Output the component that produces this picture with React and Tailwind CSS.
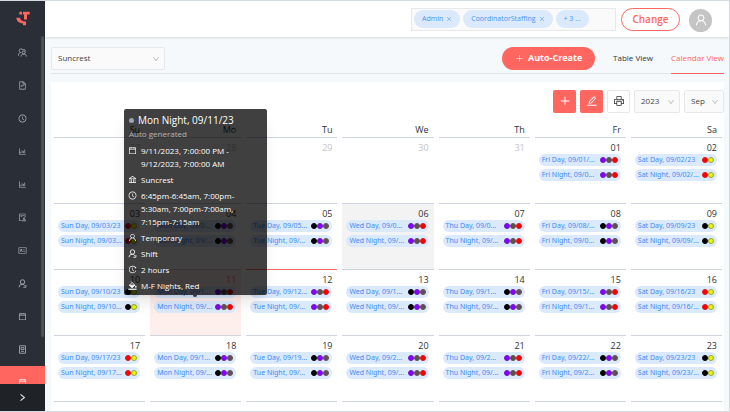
import React from "react";
import {
  AiOutlineFileText, AiOutlineClockCircle, AiOutlineBarChart, AiOutlineIdcard, AiOutlineCalendar,
  AiOutlineUser, AiOutlinePrinter, AiOutlineEdit, AiOutlinePlus, AiOutlineRight, AiOutlineDown,
  AiOutlineBank, AiOutlineClose, AiOutlineAudit, AiOutlineHistory,
} from "react-icons/ai";

function Logo() {
  return (
    <svg viewBox="0 0 42 44" className="h-[15px] w-[14px] text-[#ff6660]" fill="currentColor" aria-hidden="true">
      <path d="M10 2h8v8h-8z M21 2h20v8h-8v15h-9V10h-3z" />
      <path d="M1 20h11c1 8 7 11 18 11v11h-9v-5C10 37 2 31 1 20z" />
    </svg>
  );
}

function PaintBucket({ className }) {
  return (
    <svg viewBox="0 0 24 24" className={className} fill="none" stroke="currentColor" strokeWidth="2" aria-hidden="true">
      <path d="M8 1l10 10-7 7-7-7 7-7" />
      <path d="M4 11h14l-7 7z" fill="currentColor" />
      <path d="M21 13c2 3 1 4 0 4s-2-1 0-4z" fill="currentColor" />
      <path d="M1 22h22" strokeWidth="3" />
    </svg>
  );
}

function UserShift({ className }) {
  return (
    <svg viewBox="0 0 24 24" className={className} fill="none" stroke="currentColor" strokeWidth="2.2" aria-hidden="true">
      <circle cx="12" cy="8" r="6" />
      <path d="M3 22c0-5 3-8 8-8s5 1 7 4M21 16v6h-7" />
    </svg>
  );
}

function UserPair({ className }) {
  return (
    <svg viewBox="0 0 24 24" className={className} fill="none" stroke="currentColor" strokeWidth="2" aria-hidden="true">
      <path d="M13 6a5 5 0 1 0-6 6C3 13 1 16 1 21" />
      <circle cx="15" cy="12" r="4" />
      <path d="M8 23c0-5 3-7 7-7s7 2 7 7M14 4c4-1 6 2 6 5" />
    </svg>
  );
}

function Ledger({ className }) {
  return (
    <svg viewBox="0 0 24 24" className={className} fill="none" stroke="currentColor" strokeWidth="2" aria-hidden="true">
      <path d="M4 2h16v20H4z" />
      <path d="M8 7h8v5H8zM8 17h8" />
    </svg>
  );
}

const NAV = [
  ["Staff", UserPair], ["Documents", AiOutlineFileText], ["Time", AiOutlineClockCircle],
  ["Reports", AiOutlineBarChart], ["Analytics", AiOutlineBarChart], ["Audit", AiOutlineAudit],
  ["Cards", AiOutlineIdcard], ["Users", UserShift], ["Calendar", AiOutlineCalendar],
  ["Ledger", Ledger],
];

const DOT = {
  k: "bg-black border-black", p: "bg-[#8800ff] border-[#7016c4]", g: "bg-[#5f4f4f] border-[#5f5555]",
  r: "bg-[#ff0000] border-[#d81818]", y: "bg-[#e8fb00] border-[#9aa334]",
};

const WEEKS = [
  [
    { d: "27", out: true }, { d: "28", out: true }, { d: "29", out: true }, { d: "30", out: true }, { d: "31", out: true },
    { d: "01", e: ["Fri Day, 09/01/...", "Fri Night, 09/0..."], c: "pgr" },
    { d: "02", e: ["Sat Day, 09/02/23", "Sat Night, 09/02/..."], c: "ry" },
  ],
  [
    { d: "03", e: ["Sun Day, 09/03/23", "Sun Night, 09/03..."], c: "ry" },
    { d: "04", e: ["Mon Day, 09/0...", "Mon Night, 09/..."], c: "kpg" },
    { d: "05", e: ["Tue Day, 09/05...", "Tue Night, 09/..."], c: "kpg" },
    { d: "06", e: ["Wed Day, 09/0...", "Wed Night, 09/..."], c: "pgr", tone: "hover" },
    { d: "07", e: ["Thu Day, 09/0...", "Thu Night, 09/..."], c: "pgr" },
    { d: "08", e: ["Fri Day, 09/08/...", "Fri Night, 09/0..."], c: "kpg" },
    { d: "09", e: ["Sat Day, 09/09/23", "Sat Night, 09/09/..."], c: "ky" },
  ],
  [
    { d: "10", e: ["Sun Day, 09/10/23", "Sun Night, 09/10..."], c: "ky" },
    { d: "11", e: ["Mon Day, 09/1...", "Mon Night, 09/..."], c: "pgr", tone: "selected" },
    { d: "12", e: ["Tue Day, 09/12...", "Tue Night, 09/..."], c: "pgr", tone: "today" },
    { d: "13", e: ["Wed Day, 09/1...", "Wed Night, 09/..."], c: "kpg" },
    { d: "14", e: ["Thu Day, 09/1...", "Thu Night, 09/..."], c: "kpg" },
    { d: "15", e: ["Fri Day, 09/15/...", "Fri Night, 09/1..."], c: "pgr" },
    { d: "16", e: ["Sat Day, 09/16/23", "Sat Night, 09/16/..."], c: "ry" },
  ],
  [
    { d: "17", e: ["Sun Day, 09/17/23", "Sun Night, 09/17..."], c: "ry" },
    { d: "18", e: ["Mon Day, 09/1...", "Mon Night, 09/..."], c: "kpg" },
    { d: "19", e: ["Tue Day, 09/19...", "Tue Night, 09/..."], c: "kpg" },
    { d: "20", e: ["Wed Day, 09/2...", "Wed Night, 09/..."], c: "pgr" },
    { d: "21", e: ["Thu Day, 09/2...", "Thu Night, 09/..."], c: "pgr" },
    { d: "22", e: ["Fri Day, 09/22/...", "Fri Night, 09/2..."], c: "kpg" },
    { d: "23", e: ["Sat Day, 09/23/23", "Sat Night, 09/23/..."], c: "ky" },
  ],
];

const TONE = {
  hover: "border-[#cfd4df] bg-[#f3f3f3]",
  selected: "border-[#cfd4df] bg-[#ffefec]",
  today: "border-[#ff6660]",
  plain: "border-[#cfd4df]",
};

function Event({ label, colors }) {
  return (
    <button className="flex h-3 w-full items-center rounded-full bg-[#dbe9fd] px-[3px] text-left font-['Noto_Sans',sans-serif] text-[7px] leading-3 text-[#3d8df7]">
      <span className="w-0 grow whitespace-nowrap">{label}</span>
      <span className="flex shrink-0">
        {colors.split("").map((c) => (
          <span key={c} className={`size-[6px] rounded-full border ${DOT[c]}`} />
        ))}
      </span>
    </button>
  );
}

function Day({ day }) {
  return (
    <div className={`h-[66px] min-w-0 border-t pl-1 pr-[5px] pt-[3px] ${TONE[day.tone || "plain"]}`}>
      <div className={`h-[13px] text-right text-[9px] leading-[14px] ${day.out ? "text-[#c4c4c4]" : day.tone === "selected" ? "text-[#ff6660]" : "text-[#333]"}`}>
        {day.d}
      </div>
      {day.e && (
        <div className="flex flex-col gap-[3px]">
          {day.e.map((l) => <Event key={l} label={l} colors={day.c} />)}
        </div>
      )}
    </div>
  );
}

function Select({ label, value, className }) {
  return (
    <div className={`relative ${className}`}>
      <select aria-label={label} className="block h-full w-full appearance-none rounded-[2px] border border-[#e6e8ec] bg-[#fafafa] px-[6px] text-[8px] text-[#444]">
        <option>{value}</option>
      </select>
      <AiOutlineDown className="pointer-events-none absolute right-[5px] top-2 size-2 text-[#b5b5b5]" />
    </div>
  );
}

function Tag({ children, closable }) {
  return (
    <span className="flex h-[18px] items-center gap-[3px] rounded-full bg-[#dbe9fd] px-2 text-[7px] text-[#4a96f8]">
      {children}
      {closable && <button aria-label={`Remove ${children}`}><AiOutlineClose className="size-[6px]" /></button>}
    </span>
  );
}

function TipRow({ icon: Icon, children }) {
  return (
    <div className="flex gap-1">
      <Icon className="mt-[2px] size-[9px] shrink-0" />
      <span>{children}</span>
    </div>
  );
}

function Tooltip() {
  return (
    <div role="tooltip" className="absolute left-[124px] top-[108px] w-[143px] rounded-[2px] bg-black/75 px-1 pb-[3px] pt-1 text-[8px] leading-[13px] text-white shadow-lg">
      <div className="flex items-center gap-1 pl-px text-[10px] leading-[14px]">
        <span className="size-[5px] rounded-full bg-[#9aa5b1]" />Mon Night, 09/11/23
      </div>
      <div className="pl-px leading-[13px] text-[#b5b5b5]">Auto generated</div>
      <div className="mt-1 flex flex-col gap-[3px]">
        <TipRow icon={AiOutlineCalendar}>9/11/2023, 7:00:00 PM -<br />9/12/2023, 7:00:00 AM</TipRow>
        <TipRow icon={AiOutlineBank}>Suncrest</TipRow>
        <TipRow icon={AiOutlineClockCircle}>6:45pm-6:45am, 7:00pm-<br />5:30am, 7:00pm-7:00am,<br />7:15pm-7:15am</TipRow>
        <TipRow icon={AiOutlineUser}>Temporary</TipRow>
        <TipRow icon={UserShift}>Shift</TipRow>
        <TipRow icon={AiOutlineHistory}>2 hours</TipRow>
        <TipRow icon={PaintBucket}>M-F Nights, Red</TipRow>
      </div>
      <span className="absolute -bottom-[2px] left-[69px] h-[2px] w-1 rounded-b-full bg-black/75" />
    </div>
  );
}

export default function App() {
  return (
    <div className="relative flex h-screen min-h-[412px] overflow-hidden border-b border-r border-t border-[#d3dbe3] bg-[#f6f9fc] font-['Open_Sans','Noto_Sans',sans-serif] text-[#333]">
      <aside className="flex w-[45px] shrink-0 flex-col bg-[#2a2e37]">
        <div className="flex h-[37px] items-center justify-center">
          <Logo />
        </div>
        <div className="flex min-h-0 grow overflow-hidden">
          <nav className="flex grow flex-col pl-1">
            {NAV.map(([name, Icon]) => (
              <a key={name} href="#" aria-label={name} className="flex h-[33px] shrink-0 items-center justify-center text-[#b8babf]">
                <Icon className="size-[9px]" />
              </a>
            ))}
            <a href="#" aria-label="Schedule" className="-ml-1 -mr-1 flex h-[33px] shrink-0 items-center justify-center bg-[#ff6660] text-white">
              <AiOutlineCalendar className="size-[9px]" />
            </a>
          </nav>
          <div className="mr-px h-[301px] w-[3px] rounded-full bg-[#4a4f58]" />
        </div>
        <button aria-label="Expand menu" className="relative flex h-[27px] shrink-0 items-center justify-center bg-[#1f2226] text-white">
          <AiOutlineRight className="size-[9px]" strokeWidth="40" stroke="currentColor" />
        </button>
      </aside>

      <div className="flex min-w-0 grow flex-col">
        <header className="flex h-[36px] shrink-0 items-center justify-end bg-white pr-[17px] shadow-sm">
          <div className="flex h-[23px] w-[205px] items-center gap-[3px] border border-[#e6e8ec] bg-[#fafafa] px-[2px]">
            <Tag closable>Admin</Tag>
            <Tag closable>CoordinatorStaffing</Tag>
            <Tag>+ 3 ...</Tag>
          </div>
          <button className="ml-[5px] h-[23px] w-[59px] rounded-full border border-[#ff6660] text-[10px] font-semibold text-[#ff6660]">Change</button>
          <button aria-label="Account" className="ml-[9px] mt-[2px] flex size-[23px] items-center justify-center rounded-full bg-[#c4c4c4] text-white">
            <AiOutlineUser className="size-[14px]" />
          </button>
        </header>

        <div className="ml-[6px] mr-[5px] flex h-[37px] shrink-0 items-center border-b border-[#dfe4ea] pt-[6px]">
          <Select label="Facility" value="Suncrest" className="h-[23px] w-[114px]" />
          <button className="ml-auto flex h-[23px] w-[93px] items-center justify-center gap-1 rounded-full bg-[#ff6660] text-[9px] font-bold text-white">
            <AiOutlinePlus className="size-[9px]" />Auto-Create
          </button>
          <nav className="ml-[18px] flex gap-[18px] self-stretch text-[8px]">
            <a href="#" className="flex items-center">Table View</a>
            <a href="#" className="-mb-px flex items-center border-b border-[#ff6660] text-[#ff6660]">Calendar View</a>
          </nav>
        </div>

        <main className="ml-[6px] mr-[5px] mt-2 grow bg-white pl-[3px] pr-[2px]">
          <div className="-mr-[2px] flex h-[38px] items-center justify-end gap-1">
            <button aria-label="Add" className="flex size-[23px] items-center justify-center rounded-[2px] bg-[#ff6660] text-white"><AiOutlinePlus className="size-3" /></button>
            <button aria-label="Edit" className="flex size-[23px] items-center justify-center rounded-[2px] bg-[#ff6660] text-white"><AiOutlineEdit className="size-3" /></button>
            <button aria-label="Print" className="flex size-[23px] items-center justify-center rounded-[2px] border border-[#e6e8ec]"><AiOutlinePrinter className="size-3" /></button>
            <Select label="Year" value="2023" className="h-[23px] w-[46px]" />
            <Select label="Month" value="Sep" className="h-[23px] w-[40px]" />
          </div>
          <div className="mt-px grid grid-cols-7 gap-x-[5px] text-[9px]">
            {["Su", "Mo", "Tu", "We", "Th", "Fr", "Sa"].map((d) => (
              <div key={d} className="h-4 pr-[5px] text-right leading-[18px]">{d}</div>
            ))}
            {WEEKS.flat().map((day, i) => <Day key={i} day={day} />)}
            {[0, 1, 2, 3, 4, 5, 6].map((i) => <div key={i} className="h-2 border-t border-[#cfd4df]" />)}
          </div>
        </main>
      </div>
      <Tooltip />
    </div>
  );
}
